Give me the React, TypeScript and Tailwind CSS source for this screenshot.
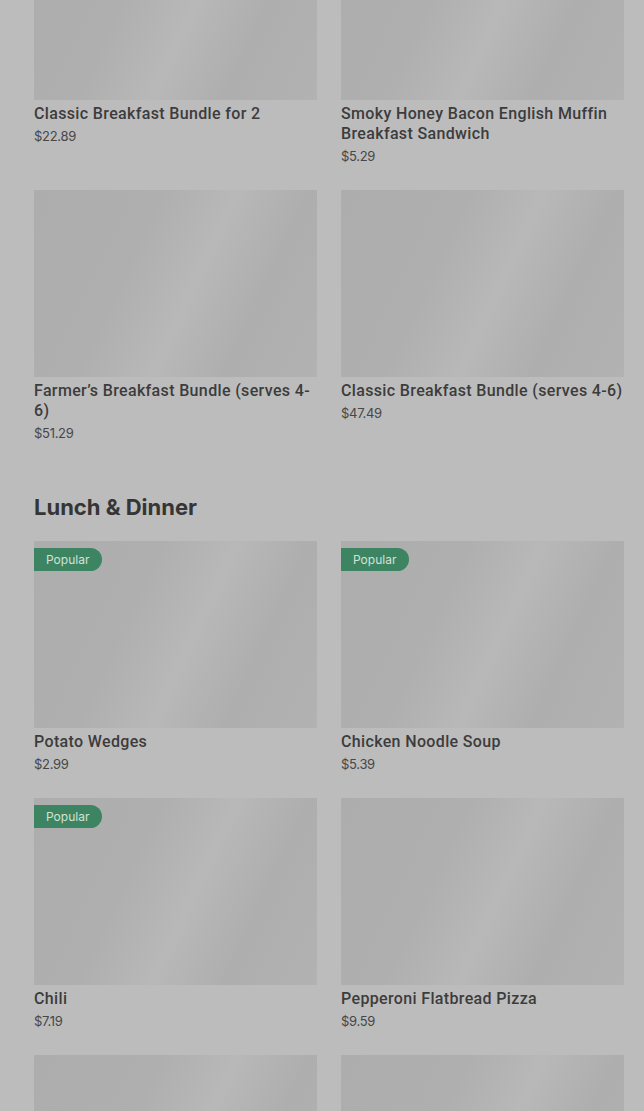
import React from "react";

type Item = { name: string; price: string; popular?: boolean };

const breakfast: Item[] = [
  { name: "Classic Breakfast Bundle for 2", price: "$22.89" },
  { name: "Smoky Honey Bacon English Muffin Breakfast Sandwich", price: "$5.29" },
  { name: "Farmer’s Breakfast Bundle (serves 4-6)", price: "$51.29" },
  { name: "Classic Breakfast Bundle (serves 4-6)", price: "$47.49" },
];

const lunch: Item[] = [
  { name: "Potato Wedges", price: "$2.99", popular: true },
  { name: "Chicken Noodle Soup", price: "$5.39", popular: true },
  { name: "Chili", price: "$7.19", popular: true },
  { name: "Pepperoni Flatbread Pizza", price: "$9.59" },
];

function Img({ popular }: { popular?: boolean }) {
  return (
    <div className="relative h-[187px] w-full bg-[linear-gradient(115deg,#adadad_0%,#afafaf_35%,#b8b8b8_55%,#aeaeae_75%,#b2b2b2_100%)]">
      {popular && (
        <div className="absolute left-0 top-[7px] flex h-[23px] items-center rounded-r-full bg-[#3d8462] pl-[12px] pr-[13px] text-[12px] text-[#d3e2d9]">
          Popular
        </div>
      )}
    </div>
  );
}

function Card({ item }: { item: Item }) {
  return (
    <div className="flex flex-col">
      <Img popular={item.popular} />
      <div
        className="mt-[4px] text-[16px] font-medium leading-[20px] tracking-[0.35px] text-[#3c3c3c]"
        style={{ fontFamily: "Roboto, 'Noto Sans', sans-serif" }}
      >
        {item.name}
      </div>
      <div className="mt-[2px] text-[13px] leading-[20px] tracking-[-0.3px] text-[#474747]">
        {item.price}
      </div>
    </div>
  );
}

export default function App() {
  return (
    <div
      className="h-[1111px] w-[644px] overflow-hidden bg-[#bcbcbc]"
      style={{ fontFamily: "Inter, 'Noto Sans', sans-serif" }}
    >
      <div className="-mt-[87px] pl-[34px] pr-[20px]">
        <div className="grid grid-cols-2 gap-x-[24px] gap-y-[24px]">
          {breakfast.map((it) => (
            <Card key={it.name} item={it} />
          ))}
        </div>
        <h2 className="mt-[50px] text-[22px] font-bold leading-[28px] tracking-[0px] text-[#353535]">
          Lunch &amp; Dinner
        </h2>
        <div className="mt-[20px] grid grid-cols-2 gap-x-[24px] gap-y-[24px]">
          {lunch.map((it, i) => (
            <Card key={i} item={it} />
          ))}
          <Img />
          <Img />
        </div>
      </div>
    </div>
  );
}
